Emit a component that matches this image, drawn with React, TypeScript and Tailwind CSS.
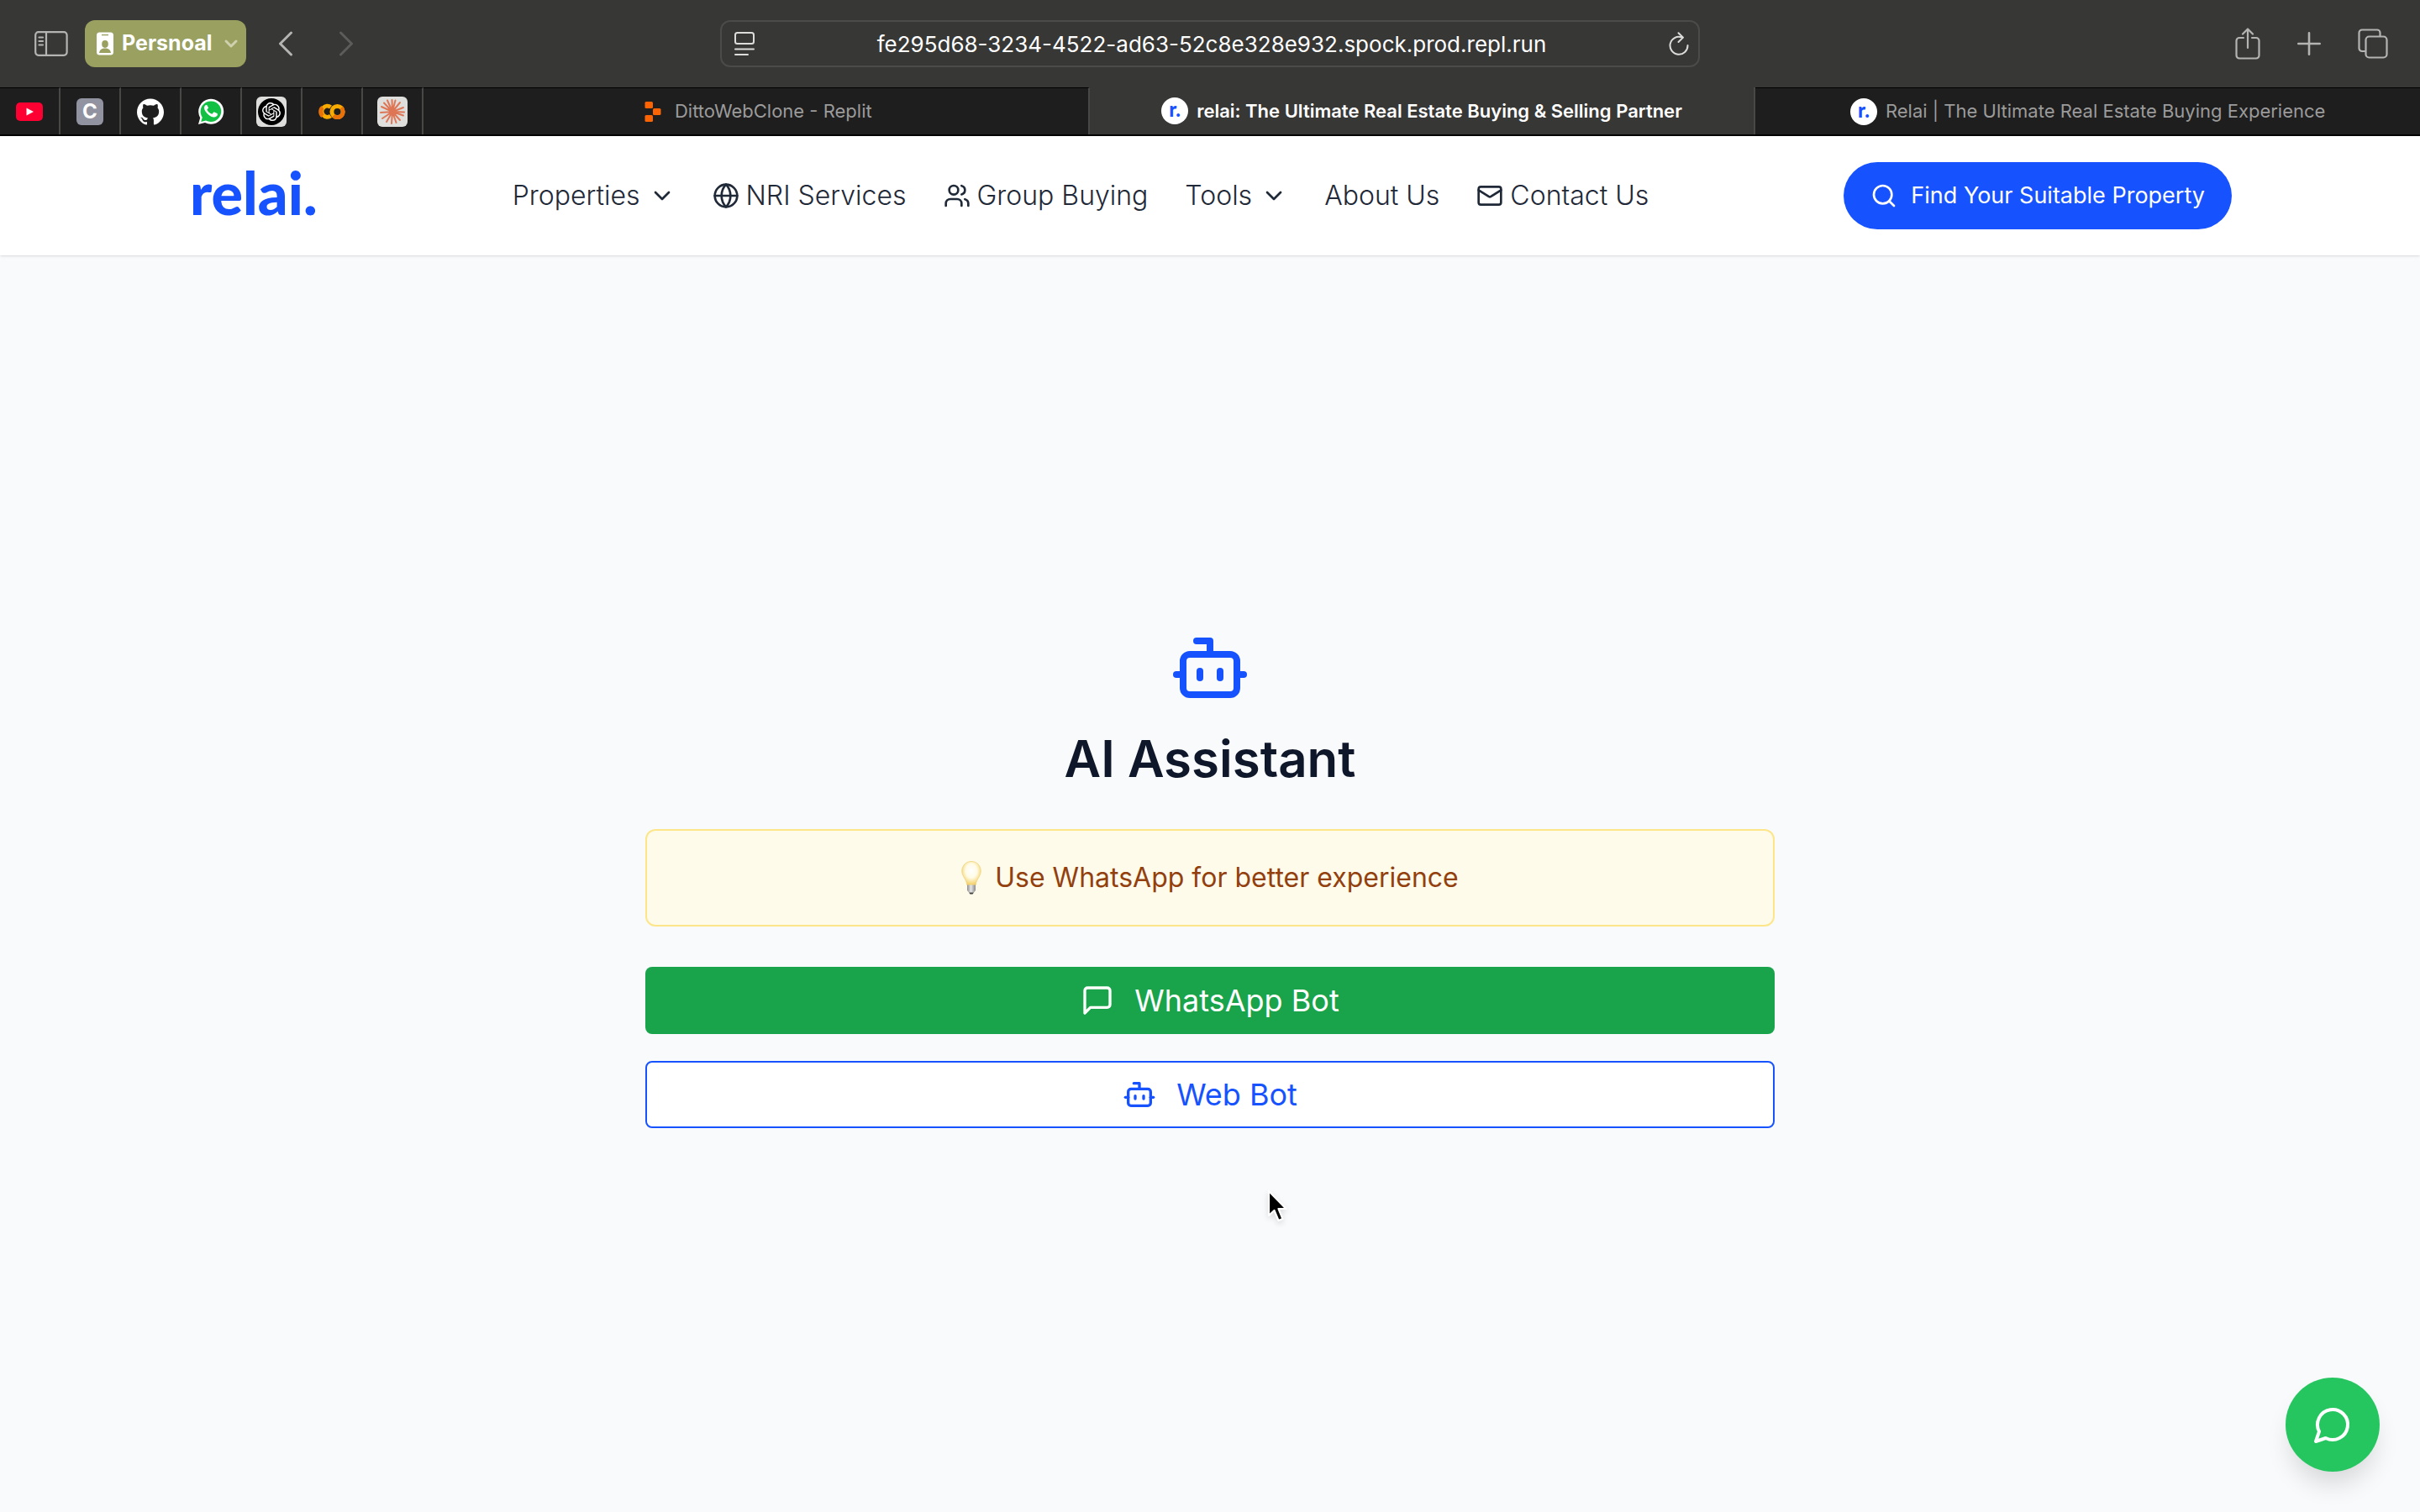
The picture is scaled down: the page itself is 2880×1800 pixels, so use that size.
import type { ReactNode } from "react";
import { Bot, ChevronDown, Globe, Mail, Search } from "lucide-react";
import { SiGithub, SiOpenai } from "react-icons/si";

const SidebarIcon = () => (
  <svg viewBox="0 0 40 30" className="h-[30px] w-10" fill="none" stroke="currentColor" strokeWidth="2.2" strokeLinecap="round">
    <rect x="1.2" y="1.2" width="37.4" height="27.6" rx="3.5" />
    <path d="M14 1v28M5.5 7.5h4.5M5.5 12h4.5M5.5 16.5h4.5" />
  </svg>
);

const BadgeIcon = () => (
  <svg viewBox="0 0 20 28" className="h-7 w-5">
    <rect width="20" height="27" y="0.5" rx="3.5" fill="#fff" />
    <path d="M6 3.6h8" stroke="#9aa05f" strokeWidth="1.4" />
    <ellipse cx="10" cy="14.5" rx="3.8" ry="4.4" fill="#9aa05f" />
    <path d="M3 25c.6-3.600 3.300-5.400 7-5.400s6.400 1.800 7 5.400z" fill="#9aa05f" />
  </svg>
);

const Chevron = ({ d, className }: { d: string; className: string }) => (
  <svg viewBox="0 0 18 30" className={className} fill="none" stroke="currentColor" strokeWidth="3" strokeLinecap="round" strokeLinejoin="round">
    <path d={d} />
  </svg>
);

const ReaderIcon = () => (
  <svg viewBox="0 0 24 28" className="h-7 w-6" fill="none" stroke="#dcdcdb" strokeWidth="2" strokeLinecap="round">
    <rect x="1" y="1" width="22" height="13" rx="2.500" />
    <path d="M1 20.500h22M1 27h15" />
  </svg>
);

const ReloadIcon = () => (
  <svg viewBox="0 0 24 28" className="h-7 w-6" fill="none" stroke="#dcdcdb" strokeWidth="2" strokeLinecap="round" strokeLinejoin="round">
    <path d="M15.500 6.300A10.500 10.500 0 1 0 22.500 16M11.500 1.200l5.500 5.400-5.500 5.400" />
  </svg>
);

const ShareIcon = () => (
  <svg viewBox="0 0 30 38" className="h-[38px] w-[30px]" fill="none" stroke="currentColor" strokeWidth="2.200" strokeLinecap="round" strokeLinejoin="round">
    <path d="M10 12H5a3.500 3.500 0 0 0-3.500 3.500V33A3.500 3.500 0 0 0 5 36.500h20a3.500 3.500 0 0 0 3.500-3.500V15.500A3.500 3.500 0 0 0 25 12h-5M15 24V2M9 7.500 15 1.500l6 6" />
  </svg>
);

const PlusIcon = () => (
  <svg viewBox="0 0 28 28" className="size-7" fill="none" stroke="currentColor" strokeWidth="2.600" strokeLinecap="round">
    <path d="M14 1.300v25.400M1.300 14h25.400" />
  </svg>
);

const TabsIcon = () => (
  <svg viewBox="0 0 36 36" className="size-9" fill="none" stroke="currentColor" strokeWidth="2.200" strokeLinecap="round">
    <rect x="9.500" y="9.500" width="25" height="25" rx="4" />
    <path d="M9 27H5a3.500 3.500 0 0 1-3.500-3.500V5A3.500 3.500 0 0 1 5 1.500h18A3.500 3.500 0 0 1 26.500 5v4" />
  </svg>
);

const YoutubeMark = () => (
  <svg viewBox="0 0 32 22" className="h-[22px] w-8">
    <rect width="32" height="22" rx="5" fill="#ff0033" />
    <path d="M12.500 6.500 21 11l-8.500 4.500z" fill="#fff" />
  </svg>
);

const WhatsappMark = () => (
  <svg viewBox="0 0 32 32" className="size-8">
    <path d="M1 31 3.200 23.200A15 15 0 1 1 9 28.900z" fill="#fff" />
    <path d="M4.200 27.900l1.600-5.200A12.300 12.300 0 1 1 10 26.500z" fill="#12c143" />
    <path
      d="M11.700 8.800c-.4-.8-.8-.8-1.300-.8-1 0-2.400 1.300-2.400 3.500 0 2 1.400 4 3 5.900 2.100 2.500 4.800 4.600 8.300 5.100 2.300.2 4.500-1.200 4.700-3.200 0-.6-.1-.9-.6-1.200l-3.200-1.600c-.6-.2-.9-.1-1.200.3l-1.300 1.600c-.3.300-.6.400-1 .2-2.200-.9-4-2.500-5.100-4.600-.2-.4-.1-.6.2-.9l1-1.300c.2-.3.200-.6.1-.9z"
      fill="#fff"
    />
  </svg>
);

const ColabMark = () => (
  <svg viewBox="0 0 32 20" className="h-5 w-8" fill="none" strokeWidth="5">
    <path d="M14.500 4.600A6.500 6.500 0 1 0 14.500 15" stroke="#f9ab00" />
    <path d="M5 5a6.500 6.500 0 0 0 0 10" stroke="#e8710a" />
    <circle cx="22.500" cy="10" r="6.600" stroke="#f9ab00" />
    <path d="M27.200 5.300A6.600 6.600 0 0 1 17.900 14.700" stroke="#e8710a" />
  </svg>
);

const ClaudeMark = () => (
  <span className="flex size-9 items-center justify-center rounded-md bg-[#dededd]">
    <svg viewBox="0 0 32 32" className="size-8" stroke="#de7656" strokeWidth="2" strokeLinecap="round">
      <path d="M16 16 15.500 2M16 16 19.500 2.500M16 16 25 5M16 16 29 11M16 16 30 16.500M16 16 29 20.500M16 16 25 26M16 16 20.500 29M16 16 15 30M16 16 9 28M16 16 4 24M16 16 2 17M16 16 3 10M16 16 6 5.500M16 16 10 2.500" />
      <circle cx="16" cy="16" r="3" fill="#de7656" />
    </svg>
  </span>
);

const ReplitMark = () => (
  <span className="flex w-8 shrink-0 justify-center">
    <svg viewBox="0 0 20 24" className="h-6 w-5" fill="#fb6404">
      <rect x="0.500" width="9.500" height="8" rx="1.500" />
      <rect x="10" y="8" width="9.500" height="8" rx="1.500" />
      <rect x="0.500" y="16" width="9.500" height="8" rx="1.500" />
    </svg>
  </span>
);

const RelaiMark = () => (
  <span className="flex size-8 shrink-0 items-center justify-center rounded-full bg-white font-[Lato] text-2xl leading-none font-black text-[#1752ff]">
    <span className="pb-1">r.</span>
  </span>
);

const UsersIcon = () => (
  <svg viewBox="0 0 24 24" className="size-8" fill="none" stroke="currentColor" strokeWidth="2" strokeLinecap="round" strokeLinejoin="round">
    <path d="M16 21v-2a4 4 0 0 0-4-4H6a4 4 0 0 0-4 4v2" />
    <circle cx="9" cy="7" r="4" />
    <path d="M22 21v-2a4 4 0 0 0-3-3.870M16 3.130a4 4 0 0 1 0 7.750" />
  </svg>
);

const MessageSquareIcon = () => (
  <svg viewBox="0 0 24 24" className="size-10" fill="none" stroke="currentColor" strokeWidth="2" strokeLinecap="round" strokeLinejoin="round">
    <path d="M21 15a2 2 0 0 1-2 2H7l-4 4V5a2 2 0 0 1 2-2h14a2 2 0 0 1 2 2z" />
  </svg>
);

const MessageCircleIcon = () => (
  <svg viewBox="0 0 24 24" className="size-12" fill="none" stroke="currentColor" strokeWidth="2" strokeLinecap="round" strokeLinejoin="round">
    <path d="M7.900 20A9 9 0 1 0 4 16.100L2 22Z" />
  </svg>
);

const BulbIcon = () => (
  <svg viewBox="0 0 24 40" className="h-10 w-6" role="img" aria-label="Tip">
    <defs>
      <radialGradient id="glow" cx="0.5" cy="0.400" r="0.600">
        <stop offset="0" stopColor="#ffffff" />
        <stop offset="0.500" stopColor="#fffbe6" />
        <stop offset="1" stopColor="#f3cf62" />
      </radialGradient>
      <linearGradient id="base" x1="0" x2="1">
        <stop offset="0" stopColor="#8f8f8f" />
        <stop offset="0.450" stopColor="#e6e6e6" />
        <stop offset="1" stopColor="#8a8a8a" />
      </linearGradient>
    </defs>
    <path d="M12 .5C5.500.5.800 5.500.800 12c0 6.500 5.200 9 6 16.500h10.400c.800-7.500 6-10 6-16.500C23.200 5.500 18.500.5 12 .5z" fill="url(#glow)" stroke="#efd27c" strokeWidth="0.800" />
    <path d="M7 28.500h10v6.500l-2 2.500H9L7 35z" fill="url(#base)" />
    <path d="M9 37.500h6l-1.500 2h-3z" fill="#444" />
  </svg>
);

const pinned: { name: string; icon: ReactNode }[] = [
  { name: "YouTube", icon: <YoutubeMark /> },
  {
    name: "C",
    icon: <span className="flex size-8 items-center justify-center rounded-md bg-[#9193a1] text-2xl font-bold text-white">C</span>,
  },
  { name: "GitHub", icon: <SiGithub className="size-8 text-white" /> },
  { name: "WhatsApp", icon: <WhatsappMark /> },
  {
    name: "ChatGPT",
    icon: (
      <span className="flex size-9 items-center justify-center rounded-md bg-[#dededd]">
        <span className="flex size-8 items-center justify-center rounded-full bg-black">
          <SiOpenai className="size-[22px] text-white" />
        </span>
      </span>
    ),
  },
  { name: "Colab", icon: <ColabMark /> },
  { name: "Claude", icon: <ClaudeMark /> },
];

const tabs = [
  { title: "DittoWebClone - Replit", icon: <ReplitMark />, active: false },
  { title: "relai: The Ultimate Real Estate Buying & Selling Partner", icon: <RelaiMark />, active: true },
  { title: "Relai | The Ultimate Real Estate Buying Experience", icon: <RelaiMark />, active: false },
];

const Toolbar = () => (
  <div className="grid h-[104px] grid-cols-[1fr_40.5%_1fr] items-center bg-[#373735] text-[#b4b4b3]">
    <div className="flex items-center pl-[41px]">
      <button aria-label="Show sidebar"><SidebarIcon /></button>
      <button className="ml-5 flex h-14 items-center rounded-xl bg-[#9aa05f] pr-[6px] pl-[14px] text-[25px] font-bold text-white">
        <BadgeIcon />
        <span className="ml-[10px]">Persnoal</span>
        <ChevronDown className="ml-[10px] size-6 text-[#cfd1ae]" strokeWidth={3} />
      </button>
      <button aria-label="Back" className="ml-[38px]"><Chevron d="M15.500 2 2.500 15l13 13" className="h-[30px] w-[18px]" /></button>
      <button aria-label="Forward" className="ml-[54px] text-[#5c5c5a]"><Chevron d="M2.500 2l13 13-13 13" className="h-[30px] w-[18px]" /></button>
    </div>
    <div className="flex h-14 items-center rounded-xl border-2 border-[#4b4b4a] pr-[11px] pl-[15px]">
      <button aria-label="Page menu"><ReaderIcon /></button>
      <input
        aria-label="Address"
        readOnly
        value="fe295d68-3234-4522-ad63-52c8e328e932.spock.prod.repl.run"
        className="min-w-0 flex-1 bg-transparent text-center text-[26px] text-white outline-none"
      />
      <button aria-label="Reload"><ReloadIcon /></button>
    </div>
    <div className="flex items-center justify-end gap-11 pr-[38px]">
      <button aria-label="Share"><ShareIcon /></button>
      <button aria-label="New tab"><PlusIcon /></button>
      <button aria-label="Tab overview"><TabsIcon /></button>
    </div>
  </div>
);

const TabBar = () => (
  <div className="flex h-[58px] border-b-2 border-black bg-[#1e1e1e]">
    {pinned.map((p) => (
      <button key={p.name} aria-label={p.name} className="flex w-[72px] shrink-0 items-center justify-center border-t border-r-2 border-t-black border-r-[#484847]">
        {p.icon}
      </button>
    ))}
    {tabs.map((t) => (
      <button
        key={t.title}
        className={
          t.active
            ? "flex flex-1 items-center justify-center gap-[10px] border-r-2 border-[#484847] bg-[#373735] text-[22px] font-semibold text-white"
            : "flex flex-1 items-center justify-center gap-[10px] border-t border-r-2 border-t-black border-r-[#484847] text-[22px] text-[#9b9b9b] last:border-r-0"
        }
      >
        {t.icon}
        <span className="whitespace-nowrap">{t.title}</span>
      </button>
    ))}
  </div>
);

const NavLink = ({ icon, label }: { icon?: ReactNode; label: string }) => (
  <a href="#" className="flex items-center gap-2">
    {icon}
    {label}
  </a>
);

const NavMenu = ({ label }: { label: string }) => (
  <button className="flex items-center gap-[10px]">
    {label}
    <ChevronDown className="size-8" />
  </button>
);

const SiteHeader = () => (
  <header className="flex h-[142px] items-center justify-between bg-white pr-56 pl-[226px] shadow-sm">
    <a href="#" className="pb-2 font-[Lato] text-[70px] leading-none font-black text-[#1752ff]">relai.</a>
    <nav aria-label="Main" className="flex items-center gap-11 text-[32px] font-light text-[#1f2937]">
      <NavMenu label="Properties" />
      <NavLink icon={<Globe className="size-8" />} label="NRI Services" />
      <NavLink icon={<UsersIcon />} label="Group Buying" />
      <NavMenu label="Tools" />
      <NavLink label="About Us" />
      <NavLink icon={<Mail className="size-8" />} label="Contact Us" />
    </nav>
    <button className="flex h-20 items-center gap-4 rounded-full bg-[#1752ff] px-8 text-[27px] text-white">
      <Search className="size-8" />
      Find Your Suitable Property
    </button>
  </header>
);

const Pointer = () => (
  <svg viewBox="0 0 26 40" className="absolute top-[1416px] left-[1508px] h-10 w-[26px] drop-shadow-md">
    <path d="M2 2v29l6.500-6 5 12 5-2-5-12h9z" fill="#000" stroke="#fff" strokeWidth="2.200" strokeLinejoin="round" />
  </svg>
);

export default function App() {
  return (
    <div className="relative flex min-h-screen flex-col bg-[#f9fafc] font-[Inter,sans-serif]">
      <Toolbar />
      <TabBar />
      <SiteHeader />
      <main className="flex flex-1 flex-col items-center justify-center pb-[14px]">
        <section className="flex w-full max-w-[1344px] flex-col items-center">
          <Bot className="size-24 text-[#1752ff]" />
          <h1 className="mt-6 text-[60px] leading-[72px] font-semibold text-[#0f172a]">AI Assistant</h1>
          <p className="mt-12 flex h-[116px] w-full items-center justify-center gap-4 rounded-xl border-2 border-[#fde68a] bg-[#fffbeb] text-[32px] text-[#92400e]">
            <BulbIcon />
            Use WhatsApp for better experience
          </p>
          <button className="mt-12 flex h-20 w-full items-center justify-center gap-6 rounded-lg bg-[#19a44b] text-4xl text-white">
            <MessageSquareIcon />
            WhatsApp Bot
          </button>
          <button className="mt-8 flex h-20 w-full items-center justify-center gap-6 rounded-lg border-2 border-[#1752ff] bg-white text-4xl text-[#1752ff]">
            <Bot className="size-10" />
            Web Bot
          </button>
        </section>
      </main>
      <button aria-label="Open chat" className="fixed right-12 bottom-12 flex size-28 items-center justify-center rounded-full bg-[#25c660] text-white shadow-[0_20px_30px_-6px_rgba(0,0,0,0.14)]">
        <MessageCircleIcon />
      </button>
      <Pointer />
    </div>
  );
}
